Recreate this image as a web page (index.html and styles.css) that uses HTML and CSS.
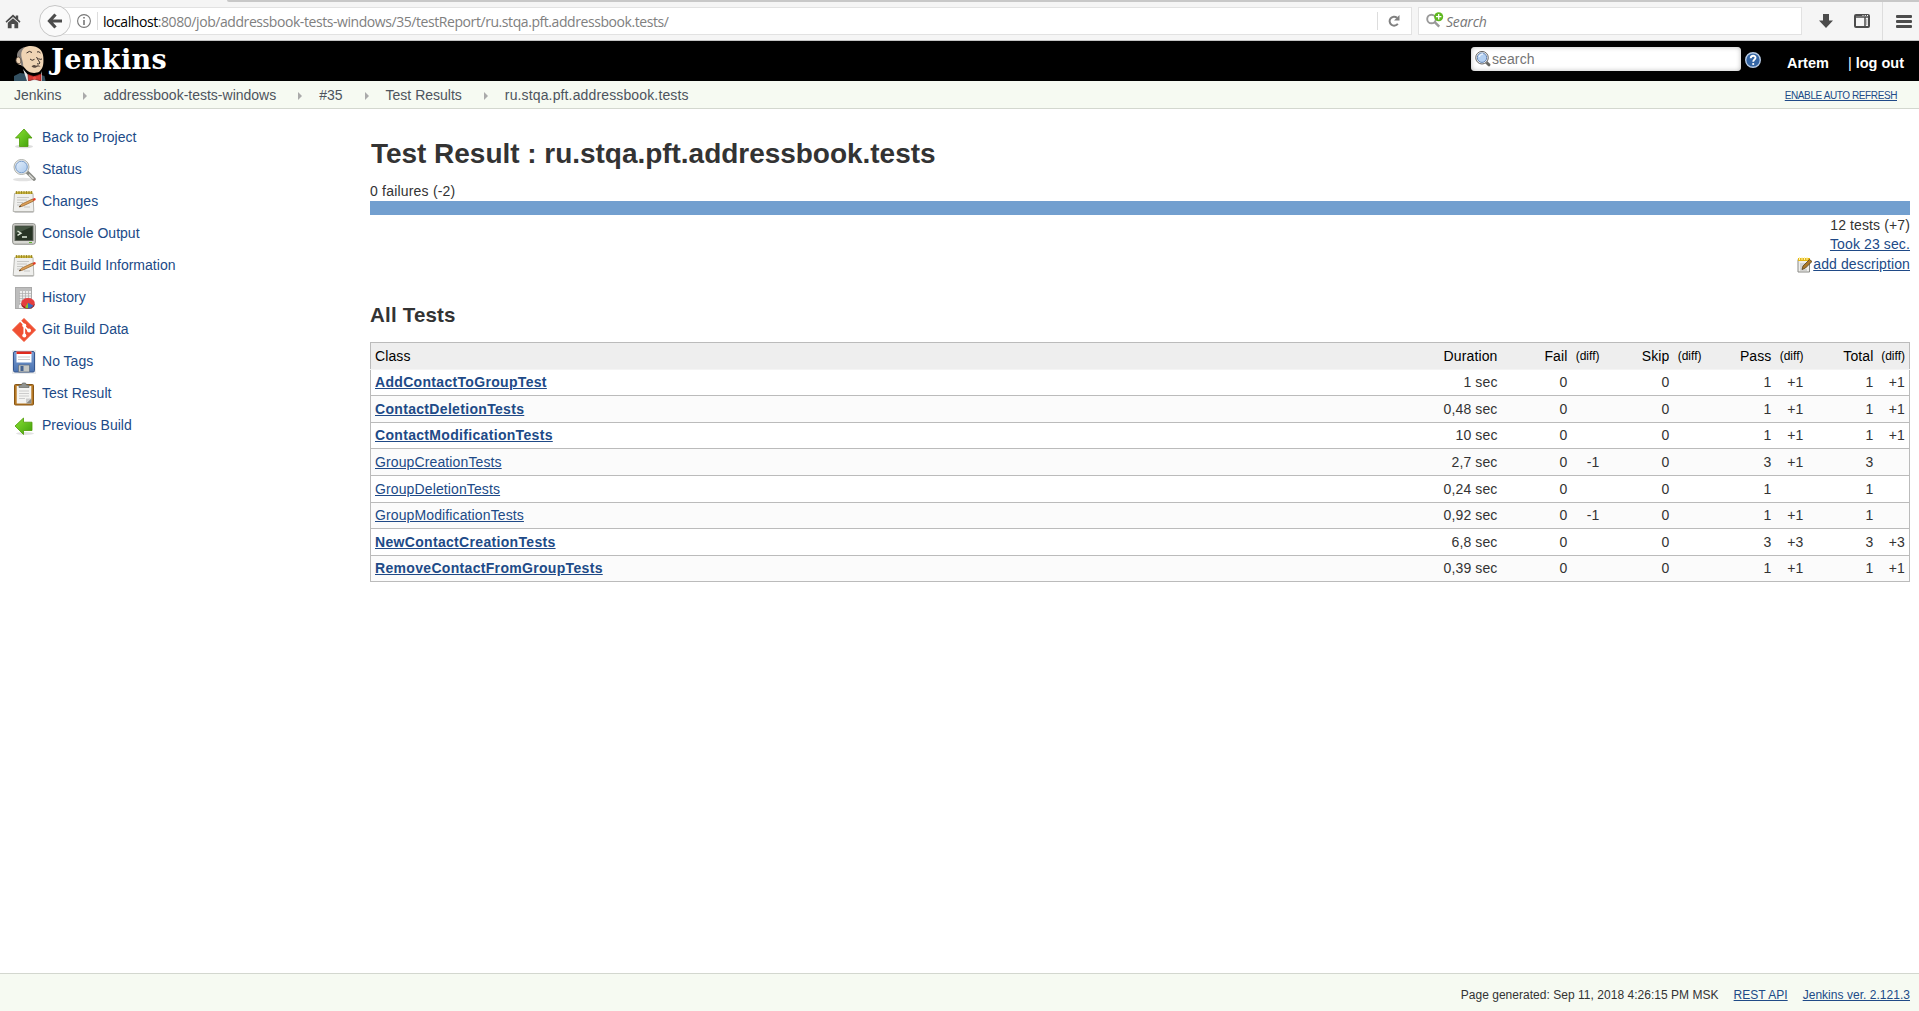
FILE: index.html
```html
<!DOCTYPE html>
<html lang="en">
<head>
<meta charset="utf-8">
<title>Test Result : ru.stqa.pft.addressbook.tests [Jenkins]</title>
<link rel="stylesheet" href="styles.css">
</head>
<body>
<svg class="defs" width="0" height="0">
  <defs>
    <linearGradient id="green" x1="0" y1="0" x2="1" y2="1"><stop offset="0" stop-color="#8ae234"/><stop offset="1" stop-color="#3f9e0a"/></linearGradient>
    <linearGradient id="lens" x1="0" y1="0" x2="1" y2="1"><stop offset="0" stop-color="#e4effb"/><stop offset="1" stop-color="#a9c8ec"/></linearGradient>
    <linearGradient id="floppy" x1="0" y1="0" x2="0" y2="1"><stop offset="0" stop-color="#7da0d4"/><stop offset="1" stop-color="#4a72b0"/></linearGradient>
    <symbol id="notepad" viewBox="0 0 24 24">
      <path d="M3 22h18l1 1H2z" fill="#ccc"/>
      <path d="M2.500 3.500h18.500L21.800 21.500H1.200z" fill="#efefed" stroke="#a5a5a0" stroke-width=".8"/>
      <path d="M3.500 1.500h17v2.500h-17z" fill="#c9b43c"/>
      <path d="M4.500 1v3M7 1v3M9.500 1v3M12 1v3M14.500 1v3M17 1v3M19.500 1v3" stroke="#8f7c1b" stroke-width=".8"/>
      <path d="M5 7.500h12M5 10h10M5 12.500h6M5 15h3M12 17h6" stroke="#c2c2c0" stroke-width=".9"/>
      <path d="M7 17l2.500-2.800L20.500 9l1.200 2L11 16z" fill="#dfa25a" stroke="#8f5b22" stroke-width=".7"/>
      <path d="M20.500 9l2-.9q1.500.3 1.200 1.800L21.700 11z" fill="#e23b24"/>
      <path d="M7 17l1.200-1.400 1 .9z" fill="#333"/>
    </symbol>
  </defs>
</svg>

<div class="browser">
  <div class="tabline"></div>
  <div class="toolbar">
    <svg class="home" width="16" height="15" viewBox="0 0 16 15"><path d="M8 .5L10.800 3V1.500h2.400v3.800L15.500 7.500l-1 1.200L8 3 1.500 8.700.5 7.500z" fill="#4c4c4c"/><path d="M8 4.200l5.200 4.500V14.300H9.400V10H6.600v4.300H2.800V8.700z" fill="#4c4c4c"/></svg>
    <div class="urlbar">
      <div class="back"><svg width="16" height="16" viewBox="0 0 16 16"><path d="M8.500 1.500L2.500 8l6 6.500M3 8h12" fill="none" stroke="#4c4c4c" stroke-width="3.200"/></svg></div>
      <svg class="info" width="14" height="14" viewBox="0 0 14 14"><circle cx="7" cy="7" r="6.400" fill="none" stroke="#777" stroke-width="1.100"/><path d="M6.200 3h1.600v1.600H6.200zM6.200 6h1.600v5H6.200z" fill="#777"/></svg>
      <div class="url"><b>localhost</b>:8080/job/addressbook-tests-windows/35/testReport/ru.stqa.pft.addressbook.tests/</div>
      <div class="reload"><svg width="12" height="12" viewBox="0 0 12 12"><path d="M9.800 8.700A4.500 4.500 0 1 1 9 2.700" fill="none" stroke="#808080" stroke-width="2"/><path d="M11.500 0v5.500H6z" fill="#808080"/></svg></div>
    </div>
    <div class="searchbar">
      <svg width="18" height="16" viewBox="0 0 18 16"><circle cx="5.500" cy="7" r="4.300" fill="none" stroke="#999" stroke-width="1.900"/><path d="M8.700 10.200l4.500 4.500" stroke="#999" stroke-width="2.400"/><circle cx="12.700" cy="4.700" r="4.500" fill="#5fb81f"/><path d="M10 4.700h5.400M12.700 2v5.400" stroke="#fff" stroke-width="1.300"/></svg>
      <span>Search</span>
    </div>
    <svg class="dl" width="14" height="14" viewBox="0 0 14 14"><path d="M4 0h6v6.500h4L7 14 0 6.500h4z" fill="#4c4c4c"/></svg>
    <svg class="panel" width="16" height="14" viewBox="0 0 16 14"><rect x="1" y="1" width="14" height="12" rx="1" fill="none" stroke="#4c4c4c" stroke-width="2"/><path d="M1 3h14M11 3v10" stroke="#4c4c4c" stroke-width="1.500"/><path d="M8.500 1.500h1M10.800 1.500h1M13 1.500h1" stroke="#fff"/><path d="M12.800 5v6" stroke="#aaa"/></svg>
    <div class="menu"><i></i><i></i><i></i></div>
  </div>
</div>

<header class="header">
  <div class="brand">
    <svg width="33" height="36" viewBox="0 0 33 36">
      <path d="M-1 36l1-5 6-3 7 1 7 4 7-3 3.500 1 1 5z" fill="#335061"/>
      <path d="M9 24l5 6 6 2 7-2 1-4v10H13z" fill="#e8e8e8"/>
      <path d="M4 17C1.500 9 7 2 15 1c8-.8 14 3.500 14.300 11 .4 6 .3 11-3.800 14.500-4 2.500-10 1.500-13-1.500l-4-4.500-4-1z" fill="#efd4b4"/>
      <path d="M3.500 13C1.800 8.500 4.500 3.800 11 2 7.500 5 7 8 7.500 12L9 18l.3 4-2.300-2-.8-4z" fill="#85807d"/>
      <path d="M4.500 12c-3.500 0-3.500 7 .8 6.700 2.500-.2 2-6.200-.8-6.700z" fill="#efd4b4" stroke="#4b3c32" stroke-width=".8"/>
      <path d="M12.500 8q3-3 5.500-.5M23 7q2-1 3.500 1M16 14q2 2.500 4.500.3M24.500 13.500q1.500 1.500 3.500.5M22.500 12q2 3.500 3.500 6-1 1.500-3 .8" fill="none" stroke="#3a302b"/>
      <path d="M17.500 21.500q2.500-2.500 4.500-.8 2.500-1.200 4.500 1-3-.8-4.500.8-2 .8-4.500-1z" fill="#5a4a40"/>
      <path d="M14 29.500l6 2 7-2.500v7l-6.500-2-6 2z" fill="#d33833" stroke="#7d1414" stroke-width=".7"/>
      <circle cx="20.500" cy="33" r="1.700" fill="#ef4a43"/>
    </svg>
    <span>Jenkins</span>
  </div>
  <div class="search">
    <svg width="18" height="18" viewBox="0 0 18 18"><path d="M12 12l3 2.800" stroke="#686864" stroke-width="3" stroke-linecap="round"/><circle cx="8" cy="7.700" r="6.300" fill="#eee" stroke="#666" stroke-width="1"/><circle cx="8" cy="7.700" r="4.700" fill="#b3d0f2" stroke="#6384b4"/><path d="M5 7q1-3 4-3" stroke="#e6f1fd" stroke-width="1.500" fill="none"/></svg>
    <span>search</span>
  </div>
  <svg class="help" width="16" height="16" viewBox="0 0 16 16"><circle cx="8" cy="8" r="7.300" fill="#3465a4" stroke="#b8cbe4" stroke-width="1.400"/><path d="M5.700 6.200C5.800 3 10.500 3 10.500 5.800c0 1.900-2.300 1.700-2.300 4" fill="none" stroke="#fff" stroke-width="1.900"/><circle cx="8.200" cy="12" r="1.100" fill="#fff"/></svg>
  <span class="user">Artem</span>
  <span class="logout"><i>|</i> log out</span>
</header>

<nav class="crumbs">
  <span>Jenkins</span><i></i><span>addressbook-tests-windows</span><i></i><span>#35</span><i></i><span>Test Results</span><i></i><span>ru.stqa.pft.addressbook.tests</span>
  <a class="refresh">ENABLE AUTO REFRESH</a>
</nav>

<div class="page">
  <aside class="side">
    <a class="task"><svg viewBox="0 0 24 24"><ellipse cx="12" cy="20.500" rx="9" ry="1.700" fill="#ddd"/><path d="M12 3l8 9h-4v8.500H7.500V12H3.500z" fill="url(#green)" stroke="#4e9a06" stroke-width=".8"/></svg>Back to Project</a>
    <a class="task"><svg viewBox="0 0 24 24"><ellipse cx="11" cy="21.500" rx="10" ry="1.700" fill="#e2e2e2"/><path d="M15 14l7 7" stroke="#888a85" stroke-width="3.600" stroke-linecap="round"/><path d="M17 16.500l4.500 4.500" stroke="#d6d6d2" stroke-width="1.500"/><circle cx="9.500" cy="9" r="7.500" fill="#eee" stroke="#adb0aa"/><circle cx="9.500" cy="9" r="5.800" fill="url(#lens)" stroke="#7299ca"/></svg>Status</a>
    <a class="task"><svg><use href="#notepad"/></svg>Changes</a>
    <a class="task"><svg viewBox="0 0 24 24"><rect x=".7" y="1.700" width="22.600" height="20.500" rx="2" fill="#d7d7d2" stroke="#888a85"/><rect x="3" y="4" width="18" height="14.500" fill="#273425" stroke="#5d6158"/><path d="M3.500 4.500h17L3.500 12z" fill="#465644"/><path d="M5.500 9l3.500 2.200-3.500 2.200M10 15h5" fill="none" stroke="#e0eadb" stroke-width="1.400"/><path d="M17 20.500h3" stroke="#5db52b"/></svg>Console Output</a>
    <a class="task"><svg><use href="#notepad"/></svg>Edit Build Information</a>
    <a class="task"><svg viewBox="0 0 24 24"><rect x="3.500" y="1.500" width="16" height="21" fill="#eee" stroke="#aaa"/><path d="M4 2h15v3H4zM4 2h3v20H4z" fill="#bdbdbd"/><path d="M7.500 5v14M10.500 5v14M13.500 5v14M16.500 5v14M7 7.500h12M7 10h12M7 12.500h12M7 15h12M7 17.500h12" stroke="#aaa" stroke-width=".7"/><ellipse cx="16" cy="18.500" rx="6.700" ry="4.300" fill="#9a1515"/><ellipse cx="16" cy="16.800" rx="6.700" ry="4.700" fill="#e43e3e"/><path d="M16 16.800l5.500 3-2 1.700q-1.500 1-3.500 1z" fill="#3c6cbc"/><path d="M16 16.800v5.500q-2 0-3-.8z" fill="#82c62a"/></svg>History</a>
    <a class="task"><svg viewBox="0 0 24 24"><path d="M12 .5L23.500 12 12 23.500.5 12z" fill="#f05033" stroke="#f05033" stroke-linejoin="round"/><path d="M8 2.500l4.300 4.500v11M12.300 8l4.500 4.800" stroke="#fff" stroke-width="1.700" fill="none"/><circle cx="12.300" cy="7.500" r="2" fill="#fff"/><circle cx="12.300" cy="17.500" r="2" fill="#fff"/><circle cx="17" cy="12.500" r="2" fill="#fff"/></svg>Git Build Data</a>
    <a class="task"><svg viewBox="0 0 24 24"><path d="M0 0h24v24H0z" fill="#ececec"/><rect x="1.500" y="1.500" width="21" height="20.500" rx="1.500" fill="url(#floppy)" stroke="#35568e"/><path d="M4.500 1.500h15v11h-15z" fill="#fff"/><path d="M4.500 1.500h15v2.500h-15z" fill="#e02a1d"/><path d="M6 7h12M6 9.500h12" stroke="#ccc"/><path d="M6.500 15h11v7h-11z" fill="#c4c6c3" stroke="#5c6b80" stroke-width=".7"/><path d="M8.500 16h3v5h-3z" fill="#45628f"/></svg>No Tags</a>
    <a class="task"><svg viewBox="0 0 24 24"><rect x="2.500" y="2.500" width="19" height="20.500" rx="1" fill="#b87a25" stroke="#875514"/><path d="M4.700 4h14.600v17.500H4.700z" fill="#f4f4f2"/><path d="M7 9h10M7 11.500h10M7 14h10M7 16.500h6" stroke="#ccc"/><path d="M19.300 16.500v5h-5.500z" fill="#8b8b87"/><path d="M14 16.500h5l-5 5z" fill="#ccc"/><path d="M7 5.500V3h2.500l1-2h3l1 2H17v2.500z" fill="#929490" stroke="#666864" stroke-width=".7"/></svg>Test Result</a>
    <a class="task"><svg viewBox="0 0 24 24"><ellipse cx="13" cy="19.500" rx="9" ry="1.500" fill="#e2e2e2"/><path d="M3 12l8.500-8v4.200H20v8.300h-8.500v4z" fill="url(#green)" stroke="#4e9a06" stroke-width=".8"/></svg>Previous Build</a>
  </aside>

  <main class="main">
    <h1>Test Result : ru.stqa.pft.addressbook.tests</h1>
    <div class="failures">0 failures (-2)</div>
    <div class="bar"></div>
    <div class="meta">
      <div>12 tests (+7)</div>
      <div><a>Took 23 sec.</a></div>
      <div class="desc"><svg width="15" height="16" viewBox="0 0 15 16"><path d="M1 2.500h11.500v12.500H1z" fill="#efefec" stroke="#898985"/><path d="M1 1h12v3H1z" fill="#e5b817"/><path d="M2.500 0v3M5 0v3M7.500 0v3M10 0v3" stroke="#fff4b0"/><path d="M3 7h6M3 9h4M3 11h3M3 13h7" stroke="#b8b8b5"/><path d="M5 12.500l1-3.500 6.500-6.500L15 4.500 8.500 11z" fill="#ad7929" stroke="#57401c" stroke-width=".8"/></svg><a>add description</a></div>
    </div>
    <h2>All Tests</h2>
    <table class="results">
      <colgroup><col><col class="n"><col class="n"><col class="d"><col class="n"><col class="d"><col class="n"><col class="d"><col class="n"><col class="d"></colgroup>
      <thead><tr><th>Class</th><th>Duration</th><th>Fail</th><th><small>(diff)</small></th><th>Skip</th><th><small>(diff)</small></th><th>Pass</th><th><small>(diff)</small></th><th>Total</th><th><small>(diff)</small></th></tr></thead>
      <tbody>
        <tr class="s"><td><a class="new">AddContactToGroupTest</a></td><td>1 sec</td><td>0</td><td></td><td>0</td><td></td><td>1</td><td>+1</td><td>1</td><td>+1</td></tr>
        <tr><td><a class="new">ContactDeletionTests</a></td><td>0,48 sec</td><td>0</td><td></td><td>0</td><td></td><td>1</td><td>+1</td><td>1</td><td>+1</td></tr>
        <tr class="s"><td><a class="new">ContactModificationTests</a></td><td>10 sec</td><td>0</td><td></td><td>0</td><td></td><td>1</td><td>+1</td><td>1</td><td>+1</td></tr>
        <tr><td><a>GroupCreationTests</a></td><td>2,7 sec</td><td>0</td><td>-1</td><td>0</td><td></td><td>3</td><td>+1</td><td>3</td><td></td></tr>
        <tr><td><a>GroupDeletionTests</a></td><td>0,24 sec</td><td>0</td><td></td><td>0</td><td></td><td>1</td><td></td><td>1</td><td></td></tr>
        <tr class="s"><td><a>GroupModificationTests</a></td><td>0,92 sec</td><td>0</td><td>-1</td><td>0</td><td></td><td>1</td><td>+1</td><td>1</td><td></td></tr>
        <tr><td><a class="new">NewContactCreationTests</a></td><td>6,8 sec</td><td>0</td><td></td><td>0</td><td></td><td>3</td><td>+3</td><td>3</td><td>+3</td></tr>
        <tr class="s"><td><a class="new">RemoveContactFromGroupTests</a></td><td>0,39 sec</td><td>0</td><td></td><td>0</td><td></td><td>1</td><td>+1</td><td>1</td><td>+1</td></tr>
      </tbody>
    </table>
  </main>
</div>

<footer class="footer"><span>Page generated: Sep 11, 2018 4:26:15 PM MSK</span><a>REST API</a><a>Jenkins ver. 2.121.3</a></footer>
</body>
</html>
```
FILE: styles.css
```css
* { box-sizing: border-box; }
body {
  margin: 0;
  height: 1011px;
  display: flex;
  flex-direction: column;
  overflow: hidden;
  background: #fff;
  color: #333;
  font: 14px/18px "Liberation Sans", Arial, sans-serif;
}
svg { display: block; flex: none; }
.defs { position: absolute; }
a { color: #204a87; text-decoration: underline; }

/* Browser chrome */
.browser { height: 41px; flex: none; background: #f5f5f5; border-bottom: 1px solid #c4c4c4; }
.tabline { height: 2px; margin-left: 227px; background: #c8c8c8; border-bottom-left-radius: 3px; }
.toolbar { display: flex; align-items: center; height: 38px; }
.home { margin-left: 5px; }
.urlbar {
  display: flex; align-items: center;
  width: 1358px; height: 28px; margin-left: 33px;
  background: #fff; border: 1px solid #e2e2e2; border-left: 0;
}
.back {
  display: flex; align-items: center; justify-content: center; flex: none;
  width: 32px; height: 32px; margin-left: -15px;
  border: 1px solid #c6c6c6; border-radius: 50%; background: #fafafa;
}
.info { margin-left: 6px; }
.url {
  flex: 1; height: 18px; margin-left: 6px; padding-left: 5px;
  border-left: 1px solid #ddd; color: #808080;
  font: 14px/20px "Open Sans", "Noto Sans", sans-serif; letter-spacing: -.43px; white-space: nowrap;
}
.url b { font-weight: 400; color: #000; }
.reload { display: flex; align-items: center; width: 34px; height: 18px; padding-left: 10px; border-left: 1px solid #ddd; }
.searchbar {
  display: flex; align-items: center; gap: 2px;
  width: 384px; height: 28px; margin-left: 6px; padding: 0 7px;
  background: #fff; border: 1px solid #e2e2e2;
  color: #777; font: italic 14px/18px "Open Sans", sans-serif; letter-spacing: -.2px;
}
.searchbar span { padding-top: 2px; }
.searchbar svg { margin-top: -2px; }
.dl { margin-left: 17px; }
.panel { margin-left: 21px; }
.menu { display: flex; flex-direction: column; justify-content: center; gap: 2px; height: 38px; margin-left: 12px; padding-left: 13px; border-left: 1px solid #ddd; }
.menu i { width: 16px; height: 3px; border-radius: 1px; background: #4c4c4c; }

/* Header */
.header { display: flex; height: 40px; flex: none; background: #000; color: #fff; font-weight: 700; }
.brand { display: flex; width: 1471px; padding: 4px 0 0 14px; overflow: hidden; }
.brand span { margin-left: 4px; font: 700 27px/30px "DejaVu Serif", serif; letter-spacing: .4px; }
.search {
  display: flex; width: 270px; height: 24px; margin-top: 6px; padding: 3px 3px;
  border-radius: 4px; background: #fff; box-shadow: inset 0 0 5px #bbb;
  color: #757575; font-weight: 400; letter-spacing: .1px;
}
.help { margin: 11px 0 0 4px; }
.user { margin: 13px 0 0 26px; font-size: 14.500px; }
.logout { margin: 13px 0 0 19px; font-size: 14.500px; white-space: nowrap; }
.logout i { font-style: normal; font-weight: 400; }

.crumbs { display: flex; align-items: center; height: 28px; flex: none; padding: 0 22px 0 14px; background: #f6faf2; border-bottom: 1px solid #d3d7cf; color: #4d545d; }
.crumbs i { width: 0; margin: 2px 17px 0 22px; border: 4px solid transparent; border-left-color: #aaa; border-right: 0; }
.crumbs i:first-of-type { margin-right: 16px; }
.crumbs span:last-of-type { letter-spacing: .14px; }
.refresh { margin-left: auto; margin-top: 2px; font-size: 10px; letter-spacing: -.4px; }

/* Content */
.page { display: flex; flex: 1; }
.side { width: 370px; padding: 12px 0 0 12px; }
.task { display: flex; align-items: center; gap: 6px; height: 32px; text-decoration: none; letter-spacing: .02px; }
.task svg { width: 24px; height: 24px; margin-top: 2px; }
.main { flex: 1; padding: 29px 9px 0 0; letter-spacing: .12px; }
h1 { margin: 0; padding-left: 1px; font-size: 28px; line-height: 32px; letter-spacing: -.03px; }
.failures { margin-top: 12px; line-height: 19px; letter-spacing: .2px; }
.bar { height: 14px; background: #729fcf; }
.meta { display: flex; flex-direction: column; align-items: flex-end; padding-top: 1px; line-height: 19.400px; }
.desc { display: flex; align-items: center; }
.desc svg { margin-right: 1px; }
h2 { margin: 29px 0 0; font-size: 20.500px; line-height: 24px; letter-spacing: .2px; }
.results { width: 100%; margin-top: 15px; border-collapse: collapse; table-layout: fixed; border: 1px solid #bbb; }
.n { width: 70px; }
.d { width: 32px; }
.results th, .results td { height: 27px; padding: 0 4px; text-align: right; line-height: 18px; white-space: nowrap; }
.results th:first-child, .results td:first-child { text-align: left; }
.results th { background: #eee; color: #000; font-weight: 400; border-bottom: 1px solid #f4f4f4; }
.results small { position: relative; top: -1px; margin-left: -4px; font-size: 12px; letter-spacing: 0; }
.results td { border-bottom: 1px solid #bbb; }
.results .s td { height: 26px; padding-bottom: 1px; }
.results tbody tr:nth-child(even) { background: #fbfbfb; }
.new { font-weight: 700; letter-spacing: .32px; }

.footer { display: flex; justify-content: flex-end; gap: 15px; height: 38px; flex: none; padding: 12px 9px 0; background: #f6faf2; border-top: 1px solid #d3d7cf; font-size: 12px; letter-spacing: .03px; }
```
